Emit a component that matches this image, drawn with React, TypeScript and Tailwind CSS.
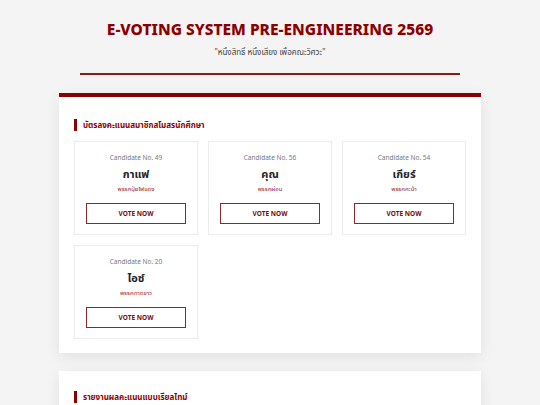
const candidates = [
  { no: 49, name: "กาแฟ", party: "พรรคปุ๋ยไฟแดง" },
  { no: 56, name: "คุณ", party: "พรรคผ่อน" },
  { no: 54, name: "เกียร์", party: "พรรคคะน้า" },
  { no: 20, name: "ไอซ์", party: "พรรคกาดขาว" },
];

const SectionTitle = ({ children }: { children: string }) => (
  <div className="flex items-center gap-[6px]">
    <span className="w-[3px] h-[12px] bg-[#8b0000]" />
    <h2 className="text-[8px] font-bold text-[#8b0000] leading-none">{children}</h2>
  </div>
);

export default function App() {
  return (
    <div
      className="min-h-[405px] bg-[#f4f4f4] pb-10"
      style={{ fontFamily: '"Noto Sans", "Noto Sans Thai", "DejaVu Sans", sans-serif' }}
    >
      <header className="pt-[18px] flex flex-col items-center">
        <h1 className="text-[15.5px] font-extrabold text-[#8b0000] leading-[22px]">
          E-VOTING SYSTEM PRE-ENGINEERING 2569
        </h1>
        <p className="mt-[7px] text-[8px] text-[#444] leading-[10px]">
          "หนึ่งสิทธิ์ หนึ่งเสียง เพื่อคณะวิศวะ"
        </p>
        <div className="mt-[16px] w-[380px] h-[2px] bg-[#8b1a1a]" />
      </header>

      <main className="mt-[18px] w-[422px] mx-auto flex flex-col gap-[18px]">
        <section className="bg-white border-t-[4px] border-[#8b0000] shadow-[0_4px_14px_rgba(0,0,0,0.08)] px-[15px] pt-[22px] pb-[14px]">
          <SectionTitle>บัตรลงคะแนนสมาชิกสโมสรนักศึกษา</SectionTitle>
          <div className="mt-[10px] grid grid-cols-3 gap-[10px]">
            {candidates.map((c) => (
              <div
                key={c.no}
                className="h-[94px] border border-[#ececec] bg-white flex flex-col items-center px-[11px] pt-[12px]"
              >
                <p className="text-[6.5px] text-[#777] leading-[8px]">Candidate No. {c.no}</p>
                <p className="mt-[5px] text-[11px] font-bold text-[#222] leading-[13px]">{c.name}</p>
                <p className="mt-[5px] text-[6px] text-[#a01818] leading-[8px]">{c.party}</p>
                <button className="mt-[10px] w-full h-[21px] border border-[#8b2a2a] text-[6.5px] font-bold text-[#7a0a0a] bg-white">
                  VOTE NOW
                </button>
              </div>
            ))}
          </div>
        </section>

        <section className="bg-white shadow-[0_4px_14px_rgba(0,0,0,0.08)] px-[15px] pt-[20px] pb-[40px]">
          <SectionTitle>รายงานผลคะแนนแบบเรียลไทม์</SectionTitle>
        </section>
      </main>
    </div>
  );
}
